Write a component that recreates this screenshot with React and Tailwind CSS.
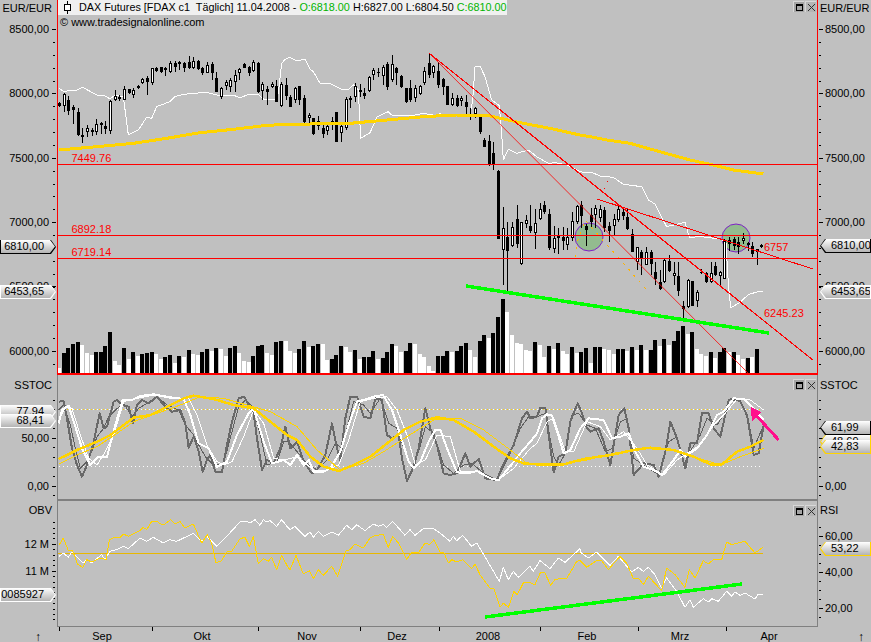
import React from 'react';

// helpers: series were read off 3x crops, so they are stored as crop coords
const crop = (ox, oy, arr) => {
  const out = [];
  for (let i = 0; i < arr.length; i += 2) out.push(`${ox + arr[i] / 3},${oy + arr[i + 1] / 3}`);
  return out.join(' ');
};
const series = (...parts) => parts.map(([ox, oy, arr]) => crop(ox, oy, arr)).join(' ');
const barX = (i) => Math.round(59.2 + 4.62 * i);

// volume: crop y of bar top, negative = black bar
const volume = [
  462, -417, -402, -390, -384, 392, 417, 423, -414, -414, -396, -354, 441, 453, -402, 435, -414, 426, -420, -417, -414, 420, 435, -429, -423, 447, -426, 429, -408, 420, 423, -414, -405, 411, -402, 405, 426, -402, -396, 417, 441, 444, -426, -396, -393, 417, 423, -384, -381, 381,
  411, 417, -405, -381, 399, -396, -390, 390, 438, -435, -423, -396, 399, 414, -408, 435, -429, -429, -411, 435, -432, -414, -390, 396, 414, -411, -387, 390, 420, 429, 456, 471, -426, -426, -411, 414, -411, -396, -387, 408, 429, -381, -363, 372, -357, -309, -255, 294, 363, 387, 390, 408, 411, -384, 393, 429, -396, 405, -387, 411, 420, -399, 417,
  -414, -402, 447, -399, -399, 405, 408, 420, -405, -405, 411, -399, 408, -393, 408, -408, -378, 396, -375, 393, -381, -351, -336, 360, -354, 405, 420, 426, -414, 432, -414, -402, 414, -414, 423, 435, -432, 428, -405,
];

// candles: [bodyTop, bodyBottom, wickTop, wickBottom, white]
const candles = [
  [103, 106, 102, 107, 0], [94, 106, 93, 112, 1], [100, 111, 96, 115, 0], [107, 110, 105, 124, 0], [112, 135, 108, 136, 0], [135, 137, 128, 143, 0], [128, 132, 125, 137, 1], [130, 132, 128, 136, 1], [124, 132, 119, 135, 1], [123, 125, 122, 134, 0],
  [126, 129, 121, 134, 0], [101, 131, 100, 134, 1], [96, 100, 90, 101, 1], [97, 99, 95, 101, 0], [89, 100, 86, 100, 1], [89, 93, 89, 94, 0], [90, 95, 88, 98, 1], [86, 88, 85, 89, 0], [79, 83, 78, 84, 1], [78, 82, 76, 95, 0],
  [68, 83, 68, 85, 1], [68, 71, 67, 72, 0], [67, 72, 67, 73, 0], [68, 70, 67, 76, 0], [63, 72, 61, 73, 1], [63, 67, 61, 72, 0], [62, 64, 61, 70, 1], [63, 68, 62, 72, 0], [62, 68, 56, 69, 0], [61, 68, 57, 69, 1],
  [61, 69, 60, 70, 0], [68, 73, 67, 75, 0], [65, 73, 62, 73, 1], [64, 73, 62, 80, 0], [78, 92, 72, 92, 0], [88, 97, 87, 99, 1], [82, 86, 80, 90, 1], [80, 87, 78, 92, 1], [75, 82, 70, 92, 1], [69, 73, 68, 80, 1],
  [64, 68, 63, 68, 0], [67, 73, 66, 76, 0], [62, 71, 60, 72, 1], [63, 92, 62, 93, 0], [84, 91, 82, 100, 1], [89, 92, 86, 105, 0], [84, 87, 82, 88, 1], [86, 102, 80, 102, 0], [84, 106, 82, 107, 1], [85, 96, 78, 100, 0],
  [97, 107, 95, 107, 0], [88, 100, 87, 103, 1], [86, 100, 86, 105, 0], [98, 122, 95, 123, 0], [115, 118, 113, 125, 1], [118, 134, 118, 135, 0], [121, 126, 116, 130, 1], [128, 134, 125, 138, 0], [126, 131, 125, 135, 1], [121, 125, 117, 130, 1],
  [112, 142, 112, 142, 0], [126, 133, 124, 142, 1], [99, 128, 97, 130, 1], [98, 100, 96, 108, 0], [86, 97, 83, 102, 1], [90, 92, 84, 97, 0], [93, 96, 88, 99, 0], [77, 91, 76, 92, 1], [70, 75, 68, 80, 1], [72, 73, 68, 77, 0],
  [67, 76, 65, 85, 1], [64, 87, 62, 90, 0], [64, 80, 55, 82, 1], [68, 73, 67, 85, 0], [76, 87, 75, 88, 0], [88, 102, 88, 103, 0], [88, 100, 80, 102, 0], [88, 98, 85, 102, 1], [86, 94, 85, 95, 1], [71, 83, 67, 85, 1],
  [63, 75, 53, 78, 0], [66, 73, 65, 78, 1], [71, 85, 62, 88, 0], [79, 87, 78, 95, 0], [86, 105, 86, 105, 0], [98, 105, 93, 106, 1], [98, 106, 95, 107, 0], [98, 101, 96, 106, 1], [102, 107, 95, 115, 0], [114, 116, 108, 120, 0],
  [108, 114, 107, 118, 1], [116, 132, 115, 134, 0], [140, 147, 138, 147, 0], [141, 165, 135, 166, 0], [153, 164, 142, 170, 0], [171, 239, 170, 239, 0], [228, 250, 207, 285, 1], [237, 251, 222, 291, 0], [227, 246, 222, 247, 1], [219, 244, 205, 248, 0],
  [222, 264, 222, 265, 1], [220, 224, 215, 228, 1], [226, 231, 205, 233, 0], [223, 233, 209, 249, 1], [209, 219, 203, 220, 1], [205, 212, 201, 214, 0], [214, 248, 209, 250, 0], [238, 249, 226, 253, 1], [236, 238, 228, 254, 0], [237, 241, 227, 250, 0],
  [237, 245, 228, 250, 1], [221, 238, 212, 241, 1], [206, 222, 205, 224, 1], [205, 216, 201, 228, 0], [226, 230, 224, 246, 0], [215, 222, 208, 228, 0], [208, 215, 205, 228, 1], [209, 218, 205, 222, 1], [210, 228, 207, 232, 0], [226, 231, 222, 242, 0],
  [219, 226, 214, 235, 1], [209, 220, 206, 222, 1], [212, 216, 208, 220, 0], [217, 229, 208, 230, 0], [234, 252, 229, 252, 0], [247, 262, 247, 270, 1], [252, 259, 250, 275, 0], [252, 265, 247, 265, 1], [252, 264, 250, 275, 0], [272, 279, 262, 285, 0],
  [282, 289, 270, 290, 0], [260, 282, 258, 283, 1], [261, 271, 255, 272, 0], [273, 276, 262, 285, 1], [276, 291, 262, 296, 0], [306, 309, 301, 319, 0], [280, 307, 279, 308, 1], [281, 306, 281, 306, 0], [292, 301, 290, 307, 1], [272, 273, 269, 274, 0],
  [273, 282, 272, 283, 0], [273, 282, 262, 283, 1], [266, 275, 262, 276, 0], [272, 276, 271, 286, 1], [241, 279, 239, 279, 1], [240, 244, 237, 251, 0], [239, 246, 237, 250, 0], [242, 247, 237, 254, 0], [238, 241, 233, 244, 1], [243, 245, 242, 251, 0],
  [246, 254, 242, 257, 0], [249, 252, 249, 265, 1], [245, 247, 244, 248, 0],
];

const mainWhite = series(
  [0, 0, [177, 264, 190, 274, 232, 270, 248, 262, 290, 285, 312, 286, 330, 297, 345, 285, 370, 290, 385, 405, 415, 390, 440, 352, 455, 355, 470, 320, 510, 305, 525, 290, 550, 283, 580, 280, 620, 277, 660, 287, 700, 285, 720, 294, 745, 283, 775, 283, 790, 297, 825, 297, 835, 280, 845, 190, 855, 178, 870, 172]],
  [290, 0, [20, 182, 45, 178, 60, 208, 70, 215, 90, 250, 120, 250, 155, 268, 175, 268, 190, 255, 205, 270, 212, 415, 240, 398, 262, 350, 295, 335, 305, 345, 360, 348, 400, 340, 440, 347, 450, 340, 460, 348, 500, 345, 540, 345, 548, 300, 555, 200, 570, 198, 585, 230, 605, 300, 628, 317, 635, 400, 640, 480, 655, 447, 680, 460, 715, 450, 740, 470, 775, 490, 795, 488, 830, 495, 870, 515]],
  [580, 0, [15, 518, 35, 517, 60, 528, 100, 532, 130, 553, 185, 560, 205, 600, 225, 612, 240, 642]],
  [580, 214, [260, 38, 315, 25, 328, 70, 365, 68, 420, 75, 438, 85, 445, 210, 452, 282, 480, 265, 505, 242, 530, 234, 548, 232]],
);
const mainYellow = series(
  [0, 0, [177, 450, 290, 440, 400, 430, 500, 415, 600, 398, 700, 388, 800, 376, 870, 373]],
  [290, 0, [180, 370, 290, 360, 400, 350, 500, 345, 600, 348, 700, 370, 780, 385, 870, 405]],
  [580, 0, [30, 410, 80, 420, 150, 430, 250, 458, 330, 480, 400, 495, 460, 510, 550, 522]],
);

const ST = [57, 385];
const MT = [297, 385];
const RT = [537, 385];
const grayThick = series(
  [...ST, [5, 50, 20, 48, 30, 100, 45, 190, 60, 240, 75, 275, 90, 240, 110, 170, 128, 85, 140, 130, 150, 125, 170, 50, 180, 45, 195, 60, 215, 65, 228, 115, 240, 60, 255, 45, 275, 55, 300, 35, 320, 60, 345, 80, 370, 75, 385, 115, 395, 188, 410, 155, 425, 200, 437, 260, 450, 225, 460, 210, 475, 260, 495, 260, 510, 180, 525, 110, 545, 40, 562, 35, 580, 70, 590, 85, 600, 160, 615, 255, 630, 225, 650, 235, 670, 190, 685, 125, 700, 190]],
  [...MT, [0, 170, 20, 230, 45, 265, 60, 255, 85, 210, 105, 115, 120, 190, 130, 225, 145, 100, 160, 35, 180, 35, 200, 95, 220, 100, 235, 40, 255, 45, 270, 150, 285, 160, 305, 150, 315, 220, 330, 288, 350, 245, 365, 190, 385, 70, 400, 130, 420, 180, 440, 265, 460, 270, 480, 265, 505, 205, 520, 245, 545, 222, 565, 280, 600, 285, 620, 235, 650, 180, 675, 100, 690, 80, 700, 100]],
  [...RT, [0, 95, 10, 68, 25, 68, 35, 150, 50, 262, 65, 215, 85, 205, 100, 110, 122, 55, 135, 85, 150, 130, 160, 140, 185, 130, 200, 170, 220, 240, 245, 90, 262, 70, 275, 130, 290, 270, 320, 235, 350, 240, 365, 275, 385, 200, 400, 110, 420, 160, 445, 250, 460, 175, 480, 175, 495, 85, 515, 85, 530, 130, 550, 155, 575, 45, 590, 40, 610, 50, 630, 90, 640, 150, 650, 210, 665, 205, 680, 120]],
);
const grayThin = series(
  [...ST, [5, 75, 20, 60, 40, 120, 55, 190, 70, 250, 95, 225, 120, 155, 140, 130, 155, 95, 175, 75, 200, 55, 225, 95, 245, 70, 270, 55, 300, 35, 330, 60, 365, 75, 385, 120, 410, 150, 425, 180, 445, 215, 470, 240, 500, 235, 525, 140, 545, 65, 565, 45, 590, 70, 610, 150, 630, 240, 660, 230, 680, 170, 695, 170]],
  [...MT, [0, 200, 30, 235, 60, 255, 90, 225, 115, 175, 135, 190, 150, 130, 170, 50, 200, 60, 220, 85, 250, 40, 275, 115, 300, 130, 320, 190, 345, 250, 365, 200, 385, 125, 410, 145, 440, 240, 470, 265, 500, 240, 525, 235, 560, 265, 600, 285, 640, 205, 670, 130, 695, 95]],
  [...RT, [0, 95, 25, 85, 50, 215, 65, 240, 85, 205, 105, 90, 125, 85, 150, 120, 175, 130, 205, 200, 225, 190, 250, 110, 270, 100, 290, 220, 320, 240, 365, 270, 395, 170, 420, 155, 440, 240, 465, 190, 490, 150, 510, 100, 540, 120, 565, 80, 585, 45, 610, 45, 635, 110, 650, 190, 680, 120]],
);
const whiteThick = series(
  [...ST, [5, 115, 15, 75, 35, 62, 55, 125, 75, 190, 100, 240, 125, 215, 150, 215, 175, 120, 197, 45, 225, 45, 250, 33, 290, 28, 340, 37, 380, 42, 400, 90, 425, 175, 455, 190, 480, 245, 510, 230, 540, 150, 575, 85, 590, 70, 620, 170, 645, 235, 680, 225, 700, 240]],
  [...MT, [0, 210, 20, 240, 35, 225, 50, 260, 80, 260, 100, 250, 130, 200, 155, 120, 180, 50, 200, 45, 230, 35, 258, 30, 285, 75, 310, 150, 335, 230, 350, 250, 370, 230, 395, 170, 415, 135, 430, 135, 450, 190, 480, 262, 510, 265, 540, 258, 580, 280, 605, 285, 630, 255, 670, 205, 700, 170]],
  [...RT, [0, 145, 15, 100, 30, 88, 45, 92, 65, 155, 80, 205, 100, 195, 130, 130, 155, 100, 200, 105, 225, 160, 250, 155, 275, 145, 295, 200, 320, 245, 350, 255, 375, 270, 410, 225, 430, 195, 445, 215, 480, 190, 510, 150, 540, 90, 560, 80, 590, 40, 620, 42, 650, 70, 680, 105]],
);
const whiteThin = series(
  [...ST, [5, 110, 25, 65, 45, 70, 70, 150, 95, 220, 120, 240, 145, 200, 170, 150, 200, 50, 240, 40, 290, 30, 340, 40, 395, 40, 420, 90, 450, 180, 480, 230, 500, 240, 525, 230, 560, 155, 590, 75, 620, 115, 650, 220, 680, 225]],
  [...MT, [0, 215, 50, 255, 90, 255, 125, 240, 155, 165, 190, 50, 230, 40, 270, 35, 300, 75, 330, 150, 355, 240, 385, 225, 420, 150, 460, 155, 490, 260, 540, 260, 600, 288, 650, 250, 700, 190]],
  [...RT, [0, 175, 30, 110, 50, 100, 85, 200, 110, 200, 150, 110, 190, 125, 220, 165, 260, 140, 300, 190, 330, 240, 380, 270, 420, 225, 450, 205, 490, 180, 530, 120, 560, 90, 600, 42, 640, 45, 680, 75]],
);
const yellowThick = series(
  [...ST, [5, 222, 60, 195, 120, 170, 160, 150, 200, 120, 230, 98, 280, 90, 330, 65, 380, 40, 410, 32, 470, 42, 530, 60, 590, 70, 640, 110, 690, 150, 720, 165]],
  [...MT, [40, 215, 80, 245, 125, 258, 170, 240, 220, 215, 270, 175, 320, 135, 370, 110, 420, 97, 470, 105, 530, 140, 590, 185, 640, 220, 680, 235, 720, 238]],
  [...RT, [80, 238, 140, 222, 220, 210, 290, 195, 340, 188, 410, 195, 470, 215, 520, 238, 555, 238, 600, 200, 640, 185, 680, 165]],
);
const yellowThin = series(
  [...ST, [5, 238, 60, 210, 120, 185, 180, 145, 230, 110, 300, 85, 370, 60, 430, 35, 500, 40, 570, 60, 640, 80, 720, 125]],
  [...MT, [60, 195, 130, 255, 200, 235, 260, 200, 330, 155, 410, 105, 490, 100, 560, 135, 640, 195, 690, 235, 720, 238]],
  [...RT, [90, 235, 150, 225, 230, 205, 310, 190, 400, 195, 470, 215, 550, 240, 610, 215, 680, 190]],
);

const obvWhite = series(
  [0, 428, [177, 385, 190, 375, 205, 388, 215, 372, 250, 405, 260, 395, 275, 405, 305, 380, 315, 395, 330, 370, 350, 365, 370, 355, 385, 362, 420, 330, 440, 340, 460, 328, 490, 345, 510, 335, 530, 340, 580, 316, 605, 340, 620, 325, 650, 355, 680, 325, 720, 282, 740, 280, 750, 285, 765, 275, 780, 292, 790, 275, 800, 282, 810, 278, 830, 295, 845, 275, 865, 300]],
  [290, 428, [0, 305, 15, 295, 45, 325, 60, 312, 70, 328, 85, 310, 100, 325, 125, 312, 145, 322, 170, 292, 185, 305, 200, 290, 225, 308, 250, 288, 265, 295, 280, 290, 290, 298, 308, 280, 345, 322, 360, 305, 375, 322, 400, 302, 430, 302, 450, 315, 480, 340, 490, 325, 500, 338, 518, 322, 545, 355, 560, 345, 590, 395, 628, 460, 640, 418, 655, 455, 670, 430, 685, 448, 720, 415, 730, 430, 750, 398, 780, 422, 805, 390, 825, 403, 870, 362]],
  [580, 428, [0, 372, 25, 390, 50, 372, 90, 412, 115, 385, 155, 432, 175, 418, 190, 430, 205, 418, 225, 440, 245, 480, 260, 450, 290, 490, 315, 538, 330, 515, 340, 538, 370, 512, 385, 522, 395, 512, 415, 520, 440, 490, 455, 505, 465, 492, 480, 502, 495, 495, 525, 513, 535, 498, 548, 498]],
);
const obvYellow = series(
  [0, 428, [177, 352, 190, 330, 205, 368, 218, 368, 232, 408, 248, 418, 260, 395, 275, 402, 300, 390, 318, 395, 328, 335, 345, 328, 358, 330, 370, 318, 385, 325, 420, 308, 430, 298, 440, 305, 455, 280, 470, 280, 485, 290, 495, 288, 512, 275, 525, 288, 540, 280, 555, 300, 580, 288, 605, 345, 622, 320, 635, 345, 648, 405, 665, 398, 680, 372, 695, 370, 720, 332, 735, 328, 748, 355, 760, 325, 775, 408, 790, 392, 805, 400, 815, 388, 830, 425, 845, 382, 865, 420]],
  [290, 428, [0, 425, 18, 382, 40, 438, 58, 428, 70, 452, 85, 425, 100, 442, 125, 415, 143, 445, 168, 368, 180, 365, 195, 348, 220, 360, 240, 330, 255, 322, 280, 320, 295, 358, 308, 325, 325, 345, 350, 395, 365, 372, 385, 375, 405, 345, 418, 350, 432, 335, 450, 372, 462, 375, 475, 405, 485, 395, 500, 402, 518, 395, 545, 422, 555, 408, 570, 440, 600, 480, 612, 482, 630, 538, 640, 525, 655, 538, 672, 490, 682, 500, 700, 465, 715, 462, 735, 470, 752, 432, 765, 435, 782, 472, 795, 455, 815, 450, 830, 452, 860, 400]],
  [580, 428, [0, 398, 20, 418, 50, 398, 65, 398, 85, 425, 120, 385, 140, 405, 160, 452, 175, 450, 190, 470, 205, 445, 245, 488, 260, 420, 285, 440, 315, 478, 328, 425, 345, 450, 370, 398, 385, 408, 400, 395, 425, 395, 440, 342, 455, 350, 495, 340, 525, 375, 548, 358]],
);

const Line = ({ points, color, width = 1, dash }) => (
  <polyline points={points} fill="none" stroke={color} strokeWidth={width} strokeDasharray={dash} strokeLinejoin="round" />
);

const WinButtons = ({ top }) => (
  <div className={`absolute right-px flex gap-px ${top}`}>
    <div className="flex h-[11px] w-[11px] items-center justify-center border-t border-l border-[#d8d8d8] bg-[#a4a4a4]">
      <div className="h-[7px] w-[7px] border border-t-2 border-black" />
    </div>
    <div className="flex h-[11px] w-[11px] items-center justify-center border-t border-l border-[#d8d8d8] bg-[#b4b4b4]">
      <svg width="9" height="9" viewBox="0 0 9 9" shapeRendering="crispEdges">
        <path d="M1 1 8 8M8 1 1 8" stroke="#303030" fill="none" />
      </svg>
    </div>
  </div>
);

// price flag on the axis, pointing at the plot
const Tag = ({ side, top, text, edge }) => {
  const shape = side === 'left'
    ? '[clip-path:polygon(0_0,calc(100%-5px)_0,100%_50%,calc(100%-5px)_100%,0_100%)]'
    : '[clip-path:polygon(5px_0,100%_0,100%_100%,5px_100%,0_50%)]';
  const place = side === 'left'
    ? 'left-0 w-[56px]'
    : 'right-0 w-[51px]';
  return (
    <div className={`absolute h-[14px] px-px pb-px ${top} ${place} ${edge} ${shape}`}>
      <div className={`flex h-full items-center overflow-hidden bg-linear-to-b from-white to-[#b4b4b4] leading-none text-black ${shape} ${side === 'left' ? 'justify-end pr-[11px]' : 'pl-[10px]'}`}>
        {text}
      </div>
    </div>
  );
};

// tick column: y values are page coords minus the row's own top
const Axis = ({ side, height, offset, major, minor, title }) => {
  const left = side === 'left';
  return (
    <svg width={left ? 57 : 53} height={height} viewBox={`0 ${offset} ${left ? 57 : 53} ${height}`} className="block" shapeRendering="crispEdges">
      {minor.map((y) => (
        <rect key={y} x={left ? 53 : 1} y={Math.round(y)} width="2" height="1" fill="#000" />
      ))}
      {major.map(([y, label]) => (
        <g key={label}>
          <rect x={left ? 52 : 1} y={Math.round(y)} width="4" height="1" fill="#000" />
          <text x={left ? 49 : 7} y={y + 4} textAnchor={left ? 'end' : 'start'} fill="#000" shapeRendering="auto">{label}</text>
        </g>
      ))}
      {title && (
        <text x={left ? 52 : 2} y={title[0]} textAnchor={left ? 'end' : 'start'} fill="#000">{title[1]}</text>
      )}
    </svg>
  );
};

const steps = (from, to, step) => {
  const out = [];
  for (let y = from; y <= to + 0.01; y += step) out.push(y);
  return out;
};

const mainMajor = [[29, '8500,00'], [93, '8000,00'], [157.5, '7500,00'], [222, '7000,00'], [286, '6500,00'], [351, '6000,00']];
const mainMinor = steps(29, 368, 12.88);
const stocMajor = [[438, '50,00'], [485.7, '0,00']];
const stocMinor = steps(399.6, 496, 9.56);
const obvLeftMajor = [[543.7, '12 M'], [570.7, '11 M']];
const obvLeftMinor = steps(522.2, 624, 5.4);
const rsiMajor = [[535.7, '60,00'], [571.7, '40,00'], [607.7, '20,00']];
const rsiMinor = steps(526.7, 625, 9);

const months = [[102, 'Sep'], [202, 'Okt'], [307, 'Nov'], [397, 'Dez'], [488, '2008'], [587, 'Feb'], [680, 'Mrz'], [769, 'Apr']];
const monthTicks = [59, 152, 258, 360, 439, 540, 638, 726];

const App = () => {
  return (
    <div className="flex h-[642px] w-[871px] flex-col overflow-hidden bg-[#c0c0c0] font-['Liberation_Sans',sans-serif] text-[11px] text-black">
      {/* price panel */}
      <div className="flex h-[375px]">
        <div className="relative w-[57px]">
          <Axis side="left" height={375} offset={0} major={mainMajor} minor={mainMinor} title={[12, 'EUR/EUR']} />
          <Tag side="left" top="top-[240px]" text="6810,00" edge="bg-black" />
          <Tag side="left" top="top-[285px]" text="6453,65" edge="bg-white" />
        </div>
        <div className="relative w-[761px] border-x border-b-2 border-[#ff0000]">
          <svg width="759" height="373" viewBox="58 0 759 373" className="block" shapeRendering="crispEdges">
            {volume.map((v, i) => {
              const top = Math.round(214 + Math.abs(v) / 3);
              return <rect key={i} x={barX(i) - 2} y={top} width="4" height={373 - top} fill={v < 0 ? '#000' : '#fff'} />;
            })}
            <g shapeRendering="auto">
              <circle cx="589" cy="237" r="14" fill="#93bb8f" stroke="#7f20c8" />
              <circle cx="736" cy="238" r="14" fill="#93bb8f" stroke="#7f20c8" />
            </g>
            <Line points={mainWhite} color="#fff" />
            {candles.map(([t, b, wt, wb, white], i) => {
              const x = barX(i);
              return (
                <g key={i}>
                  <rect x={x} y={wt} width="1" height={wb - wt} fill="#000" />
                  <rect x={x - 1} y={t} width="3" height={b - t} fill="#000" />
                  {white === 1 && b - t > 2 && <rect x={x} y={t + 1} width="1" height={b - t - 2} fill="#fff" />}
                </g>
              );
            })}
            <Line points={mainYellow} color="#ffd400" width={3} />
            <Line points="575,257 578,240 585,220 647,290" color="#ffb400" dash="2 6" />
            <Line points="608,181 598,203" color="#ff0000" dash="1 3" />
            <rect x="58" y="164" width="759" height="1" fill="#ff0000" />
            <rect x="58" y="235" width="759" height="1" fill="#ff0000" />
            <rect x="58" y="258" width="759" height="1" fill="#ff0000" />
            <Line points="429.5,53.5 813.5,360.5" color="#ff0000" width={1.2} />
            <Line points="429.5,53.5 748.5,373.5" color="#ff0000" width={0.8} />
            <Line points="597,199 813,269" color="#ff0000" />
            <Line points="466,286 769,333" color="#00ff00" width={3.5} />
            <g fill="#ff0000" shapeRendering="auto">
              <text x="71.5" y="162">7449.76</text>
              <text x="71.5" y="233">6892.18</text>
              <text x="71.5" y="256">6719.14</text>
              <text x="764" y="251">6757</text>
              <text x="764" y="317">6245.23</text>
            </g>
          </svg>
          <div className="absolute top-0 left-0 flex h-[15px] w-[449px] items-center whitespace-pre bg-[#f0f0f0] pl-[5px] text-[10.8px] leading-none">
            <svg width="9" height="13" viewBox="0 0 9 13" className="mr-[1px] shrink-0" shapeRendering="crispEdges">
              <path d="M4.5 0V13" stroke="#000" />
              <rect x="1.5" y="3.5" width="6" height="6" fill="#fff" stroke="#000" />
            </svg>
            <span>  DAX Futures [FDAX c1  Täglich] 11.04.2008 - </span>
            <span className="text-[#00b400]">O:6818.00 </span>
            <span>H:6827.00 L:6804.50 </span>
            <span className="text-[#00b400]">C:6810.00</span>
          </div>
          <div className="absolute top-[16px] left-[2px] leading-[13px]">© www.tradesignalonline.com</div>
          <WinButtons top="top-px" />
        </div>
        <div className="relative flex-1">
          <Axis side="right" height={375} offset={0} major={mainMajor} minor={mainMinor} title={[12, 'EUR/EUR']} />
          <Tag side="right" top="top-[239px]" text="6810,00" edge="bg-black" />
          <Tag side="right" top="top-[285px]" text="6453,65" edge="bg-white" />
        </div>
      </div>

      {/* SSTOC panel */}
      <div className="flex h-[126px]">
        <div className="relative w-[57px]">
          <Axis side="left" height={126} offset={375} major={stocMajor} minor={stocMinor} title={[389, 'SSTOC']} />
          <Tag side="left" top="top-[30px]" text="77,94" edge="bg-white" />
          <Tag side="left" top="top-[39px]" text="68,41" edge="bg-white" />
        </div>
        <div className="relative w-[761px] border-x border-b-2 border-[#808080]">
          <svg width="759" height="124" viewBox="58 375 759 124" className="block" shapeRendering="crispEdges">
            <Line points="59,409 760,409" color="#ffd400" dash="1 3" />
            <Line points="61,409 760,409" color="#fff" dash="1 3" />
            <Line points="59,466 760,466" color="#fff" dash="1 3" />
            <Line points={grayThin} color="#606060" />
            <Line points={grayThick} color="#696969" width={2} />
            <Line points={whiteThin} color="#fff" />
            <Line points={whiteThick} color="#fff" width={2} />
            <Line points={yellowThin} color="#ffd400" />
            <Line points={yellowThick} color="#ffd400" width={2.5} />
            <line x1="778.7" y1="440" x2="753" y2="412" stroke="#ff0f8c" strokeWidth="3" />
            <polygon points="750.5,407 752,421 761,412" fill="#ff0f8c" />
          </svg>
          <WinButtons top="top-[4px]" />
        </div>
        <div className="relative flex-1">
          <Axis side="right" height={126} offset={375} major={stocMajor} minor={stocMinor} title={[389, 'SSTOC']} />
          <Tag side="right" top="top-[46px]" text="61,99" edge="bg-black" />
          <Tag side="right" top="top-[60px]" text="48,69" edge="bg-[#ffd400]" />
          <Tag side="right" top="top-[65px]" text="42,83" edge="bg-[#ffd400]" />
        </div>
      </div>

      {/* OBV / RSI panel */}
      <div className="flex h-[126px]">
        <div className="relative w-[57px]">
          <Axis side="left" height={126} offset={501} major={obvLeftMajor} minor={obvLeftMinor} title={[514, 'OBV']} />
          <Tag side="left" top="top-[87px]" text="0085927" edge="bg-white" />
        </div>
        <div className="relative w-[761px] border-x border-b border-[#808080]">
          <svg width="759" height="125" viewBox="58 501 759 125" className="block" shapeRendering="crispEdges">
            <rect x="58" y="553" width="705" height="1" fill="#e8b800" />
            <Line points={obvWhite} color="#fff" />
            <Line points={obvYellow} color="#ffd400" />
            <Line points="485,617 742,584" color="#00ff00" width={3.5} />
          </svg>
          <WinButtons top="top-[4px]" />
        </div>
        <div className="relative flex-1">
          <Axis side="right" height={126} offset={501} major={rsiMajor} minor={rsiMinor} title={[514, 'RSI']} />
          <Tag side="right" top="top-[41px]" text="53,22" edge="bg-[#ffd400]" />
        </div>
      </div>

      {/* time axis */}
      <svg width="871" height="15" viewBox="0 627 871 15" className="block">
        {monthTicks.map((x) => (
          <rect key={x} x={x} y="627" width="1" height="4" fill="#000" />
        ))}
        {months.map(([x, label]) => (
          <text key={label} x={x} y="640" textAnchor="middle" fill="#000">{label}</text>
        ))}
        <text x="38" y="641" textAnchor="middle" fontSize="12" fill="#000">↑</text>
        <text x="861" y="641" textAnchor="middle" fontSize="12" fill="#000">↑</text>
      </svg>
    </div>
  );
};

export default App;
